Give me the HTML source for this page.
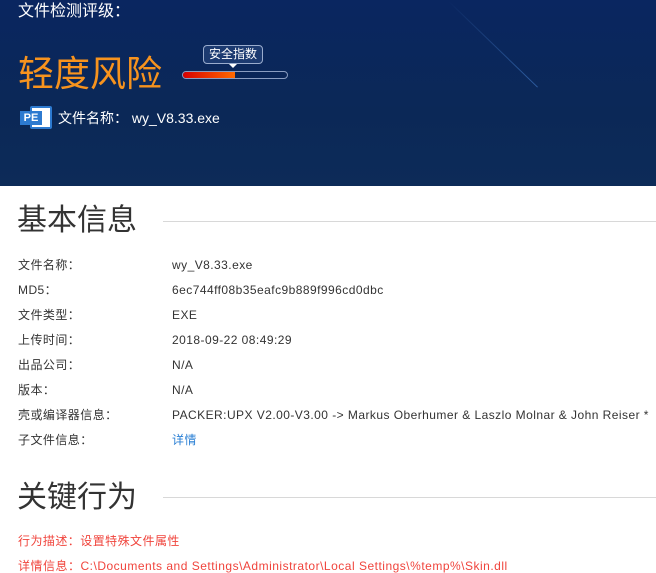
<!DOCTYPE html>
<html><head><meta charset="utf-8"><style>
*{margin:0;padding:0;box-sizing:border-box}
body{width:656px;height:573px;overflow:hidden;background:#fff;font-family:"Liberation Sans","Noto Sans CJK SC",sans-serif;position:relative}
.hd{position:absolute;left:0;top:0;width:656px;height:186px;background:linear-gradient(180deg,#0a2660 0%,#0b2857 60%,#0d2b58 100%);overflow:hidden}
.a{position:absolute;white-space:nowrap}
.row{position:absolute;font-size:12px;color:#333;white-space:nowrap;line-height:14px;letter-spacing:0.45px}
</style></head><body>
<div class="hd">
<div style="position:absolute;left:448px;top:0;width:125px;height:1px;background:linear-gradient(90deg,rgba(60,110,190,0),rgba(70,130,210,.6));transform-origin:0 0;transform:rotate(44deg)"></div>
<div class="a" style="left:18px;top:2px;font-size:16px;color:#fff;line-height:20px">文件检测评级：</div>
<div class="a" style="left:18px;top:53px;font-size:36px;color:#f7931e;line-height:42px">轻度风险</div>
<div class="a" style="left:203px;top:45px;width:60px;height:19px;border:1px solid #9aaccd;border-radius:4px;background:#1c3a70;color:#fff;font-size:12px;line-height:17px;text-align:center">安全指数</div>
<div class="a" style="left:229px;top:64px;width:0;height:0;border-left:4px solid transparent;border-right:4px solid transparent;border-top:4px solid #fff"></div>
<div class="a" style="left:182px;top:71px;width:106px;height:8px;border:1px solid #8a9cc0;border-radius:4px;background:#0a2557;overflow:hidden"><div style="width:52px;height:100%;background:linear-gradient(90deg,#d80000,#ff6a00)"></div></div>
<div class="a" style="left:20px;top:106px;width:32px;height:23px">
<div style="position:absolute;left:10px;top:0;width:22px;height:23px;background:#fff;border:2px solid #2d7ad0;border-radius:2px"></div>
<div style="position:absolute;left:0;top:5px;width:22px;height:14px;background:#2d7ad0;color:#fff;font-size:11px;font-weight:bold;line-height:14px;text-align:center">PE</div>
</div>
<div class="a" style="left:58px;top:109px;font-size:14px;color:#fff;line-height:18px">文件名称： wy_V8.33.exe</div>
</div>
<div class="a" style="left:17px;top:202px;font-size:30px;color:#333;line-height:38px">基本信息</div>
<div class="a" style="left:163px;top:221px;width:493px;height:1px;background:#d8d8d8"></div>
<div class="row" style="left:18px;top:258px">文件名称：</div><div class="row" style="left:172px;top:258px">wy_V8.33.exe</div>
<div class="row" style="left:18px;top:283px">MD5：</div><div class="row" style="left:172px;top:283px">6ec744ff08b35eafc9b889f996cd0dbc</div>
<div class="row" style="left:18px;top:308px">文件类型：</div><div class="row" style="left:172px;top:308px">EXE</div>
<div class="row" style="left:18px;top:333px">上传时间：</div><div class="row" style="left:172px;top:333px">2018-09-22 08:49:29</div>
<div class="row" style="left:18px;top:358px">出品公司：</div><div class="row" style="left:172px;top:358px">N/A</div>
<div class="row" style="left:18px;top:383px">版本：</div><div class="row" style="left:172px;top:383px">N/A</div>
<div class="row" style="left:18px;top:408px">壳或编译器信息：</div><div class="row" style="left:172px;top:408px">PACKER:UPX V2.00-V3.00 -&gt; Markus Oberhumer &amp; Laszlo Molnar &amp; John Reiser *</div>
<div class="row" style="left:18px;top:433px">子文件信息：</div><div class="row" style="left:172px;top:433px;color:#2a7fd4">详情</div>
<div class="a" style="left:17px;top:479px;font-size:30px;color:#333;line-height:38px">关键行为</div>
<div class="a" style="left:163px;top:497px;width:493px;height:1px;background:#d8d8d8"></div>
<div class="row" style="left:18px;top:534px;color:#f0443c">行为描述：设置特殊文件属性</div>
<div class="row" style="left:18px;top:559px;color:#f0443c;letter-spacing:0.5px">详情信息：C:\Documents and Settings\Administrator\Local Settings\%temp%\Skin.dll</div>
</body></html>
